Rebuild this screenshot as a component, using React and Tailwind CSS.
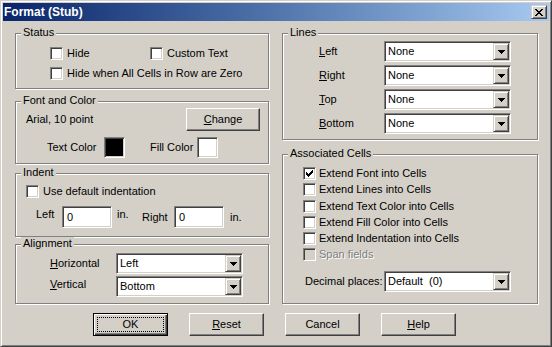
import React from "react";

const sunken =
  "border border-t-[#808080] border-l-[#808080] border-b-white border-r-white shadow-[inset_1px_1px_#404040,inset_-1px_-1px_#d4d0c8]";
const raised =
  "border border-t-[#d4d0c8] border-l-[#d4d0c8] border-b-[#404040] border-r-[#404040] shadow-[inset_1px_1px_#fff,inset_-1px_-1px_#808080]";

function CheckMark() {
  const px = [
    [6, 0, 1], [5, 1, 2], [0, 2, 1], [4, 2, 3], [0, 3, 2], [3, 3, 3], [0, 4, 5], [1, 5, 3], [2, 6, 1],
  ];
  return (
    <svg width="7" height="7" viewBox="0 0 7 7" shapeRendering="crispEdges">
      {px.map(([x, y, w], i) => (
        <rect key={i} x={x} y={y} width={w} height="1" fill="#000" />
      ))}
    </svg>
  );
}

function Checkbox({ checked, disabled }) {
  return (
    <div
      className={`w-[13px] h-[13px] shrink-0 flex items-center justify-center ${sunken} ${
        disabled ? "bg-[#d4d0c8]" : "bg-white"
      }`}
    >
      {checked && <CheckMark />}
    </div>
  );
}

function Arrow() {
  return (
    <svg width="7" height="4" viewBox="0 0 7 4" shapeRendering="crispEdges">
      <path d="M0 0h7v1h-1v1h-1v1h-1v1h-1v-1h-1v-1h-1v-1h-1z" fill="#000" />
    </svg>
  );
}

function Select({ value }) {
  return (
    <div className={`w-[127px] h-[21px] shrink-0 flex items-center bg-white p-[1px] ${sunken}`}>
      <span className="flex-1 pl-[2px] leading-[13px] whitespace-pre">{value}</span>
      <div className={`w-[16px] h-[17px] flex items-center justify-center bg-[#d4d0c8] ${raised}`}>
        <Arrow />
      </div>
    </div>
  );
}

function TextInput({ value }) {
  return (
    <div className={`w-[50px] h-[22px] shrink-0 flex items-center bg-white pl-[4px] ${sunken}`}>
      <span>{value}</span>
    </div>
  );
}

function Swatch({ color }) {
  return <div className={`w-[21px] h-[21px] shrink-0 ${sunken} ${color}`} />;
}

function Button({ children, w = "w-[75px]" }) {
  return (
    <div
      className={`${w} h-[23px] shrink-0 flex items-center justify-center bg-[#d4d0c8] border border-t-white border-l-white border-b-[#404040] border-r-[#404040] shadow-[inset_-1px_-1px_#808080]`}
    >
      {children}
    </div>
  );
}

function DefaultButton({ children }) {
  return (
    <div className="w-[75px] h-[23px] shrink-0 flex bg-[#d4d0c8] border border-black shadow-[inset_1px_1px_#fff,inset_-1px_-1px_#404040,inset_-2px_-2px_#808080]">
      <div className="flex-1 m-[3px] border border-dotted border-black flex items-center justify-center">
        {children}
      </div>
    </div>
  );
}

function Group({ title, className = "", children }) {
  return (
    <div
      className={`relative border border-[#808080] shadow-[inset_1px_1px_#fff,1px_1px_#fff] ${className}`}
    >
      <span className="absolute left-[5px] top-[-8px] px-[2px] bg-[#d4d0c8] leading-[13px]">{title}</span>
      {children}
    </div>
  );
}

function CloseX() {
  const rows = [
    [[0, 2], [6, 2]],
    [[1, 2], [5, 2]],
    [[2, 4]],
    [[3, 2]],
    [[2, 4]],
    [[1, 2], [5, 2]],
    [[0, 2], [6, 2]],
  ];
  return (
    <svg width="8" height="7" viewBox="0 0 8 7" shapeRendering="crispEdges">
      {rows.map((r, y) =>
        r.map(([x, w], i) => <rect key={`${y}-${i}`} x={x} y={y} width={w} height="1" fill="#000" />)
      )}
    </svg>
  );
}

export default function App() {
  return (
    <div className="w-[552px] h-[347px] bg-[#d4d0c8] text-black text-[11px] leading-[13px] font-['Liberation_Sans',Arial,sans-serif] border border-t-[#d4d0c8] border-l-[#d4d0c8] border-r-[#404040] border-b-[#404040] shadow-[inset_1px_1px_#fff,inset_-1px_-1px_#808080] p-[2px] flex flex-col overflow-hidden">
      {/* Title bar */}
      <div className="h-[18px] shrink-0 flex items-center justify-between bg-linear-to-r from-[#0a246a] to-[#a6caf0] pl-[1px] pr-[2px]">
        <span className="text-white font-bold text-[12px] leading-[14px]">Format (Stub)</span>
        <div className={`w-[16px] h-[14px] flex items-center justify-center bg-[#d4d0c8] ${raised}`}>
          <CloseX />
        </div>
      </div>

      {/* Body */}
      <div className="flex mt-[12px] ml-[12px] gap-[13px]">
        {/* Left column */}
        <div className="w-[254px] flex flex-col">
          <Group title="Status" className="h-[56px]">
            <div className="pt-[13px] pl-[34px] flex flex-col gap-[7px]">
              <div className="flex items-center h-[13px]">
                <div className="w-[100px] flex items-center gap-[4px]">
                  <Checkbox />
                  <span>Hide</span>
                </div>
                <div className="flex items-center gap-[4px]">
                  <Checkbox />
                  <span>Custom Text</span>
                </div>
              </div>
              <div className="flex items-center h-[13px] gap-[4px]">
                <Checkbox />
                <span>Hide when All Cells in Row are Zero</span>
              </div>
            </div>
          </Group>

          <Group title="Font and Color" className="h-[63px] mt-[12px]">
            <div className="pt-[6px] pl-[10px] pr-[8px] flex flex-col">
              <div className="flex items-center justify-between h-[23px]">
                <span>Arial, 10 point</span>
                <Button w="w-[74px]">
                  <span>
                    <u>C</u>hange
                  </span>
                </Button>
              </div>
              <div className="flex items-center h-[21px] mt-[6px] ml-[21px]">
                <span className="w-[57px]">Text Color</span>
                <Swatch color="bg-black" />
                <span className="w-[47px] ml-[25px]">Fill Color</span>
                <Swatch color="bg-white" />
              </div>
            </div>
          </Group>

          <Group title="Indent" className="h-[64px] mt-[9px]">
            <div className="pt-[11px] pl-[10px] flex flex-col">
              <div className="flex items-center h-[13px] gap-[4px]">
                <Checkbox />
                <span>Use default indentation</span>
              </div>
              <div className="flex items-center h-[22px] mt-[8px] ml-[10px]">
                <span className="w-[26px] -mt-[5px]">Left</span>
                <TextInput value="0" />
                <span className="w-[25px] ml-[5px] -mt-[5px]">in.</span>
                <span className="w-[32px]">Right</span>
                <TextInput value="0" />
                <span className="ml-[6px]">in.</span>
              </div>
            </div>
          </Group>

          <Group title="Alignment" className="h-[60px] mt-[7px]">
            <div className="pt-[8px] pl-[34px] flex flex-col gap-[2px]">
              <div className="flex items-center h-[21px]">
                <span className="w-[66px]">
                  <u>H</u>orizontal
                </span>
                <Select value="Left" />
              </div>
              <div className="flex items-center h-[21px]">
                <span className="w-[66px] -mt-[4px]">
                  <u>V</u>ertical
                </span>
                <Select value="Bottom" />
              </div>
            </div>
          </Group>
        </div>

        {/* Right column */}
        <div className="w-[256px] flex flex-col">
          <Group title="Lines" className="h-[107px]">
            <div className="pt-[7px] pl-[36px] flex flex-col gap-[3px]">
              {[
                ["L", "eft"],
                ["R", "ight"],
                ["T", "op"],
                ["B", "ottom"],
              ].map(([a, b]) => (
                <div key={a} className="flex items-center h-[21px]">
                  <span className="w-[65px]">
                    <u>{a}</u>
                    {b}
                  </span>
                  <Select value="None" />
                </div>
              ))}
            </div>
          </Group>

          <Group title="Associated Cells" className="h-[150px] mt-[14px]">
            <div className="pt-[12px] pl-[20px] flex flex-col gap-[3.3px]">
              {[
                ["Extend Font into Cells", true],
                ["Extend Lines into Cells", false],
                ["Extend Text Color into Cells", false],
                ["Extend Fill Color into Cells", false],
                ["Extend Indentation into Cells", false],
              ].map(([t, c]) => (
                <div key={t} className="flex items-center h-[13px] gap-[3px]">
                  <Checkbox checked={c} />
                  <span>{t}</span>
                </div>
              ))}
              <div className="flex items-center h-[13px] gap-[3px]">
                <Checkbox disabled />
                <span className="text-[#808080] [text-shadow:1px_1px_#fff]">Span fields</span>
              </div>
              <div className="flex items-center h-[21px] mt-[6.7px] ml-[2px]">
                <span className="w-[79px]">Decimal places:</span>
                <Select value="Default  (0)" />
              </div>
            </div>
          </Group>
        </div>
      </div>

      {/* Buttons */}
      <div className="flex mt-[9px] ml-[90px] gap-[21px]">
        <DefaultButton>OK</DefaultButton>
        <Button>
          <span>
            <u>R</u>eset
          </span>
        </Button>
        <Button>Cancel</Button>
        <Button>
          <span>
            <u>H</u>elp
          </span>
        </Button>
      </div>
    </div>
  );
}
